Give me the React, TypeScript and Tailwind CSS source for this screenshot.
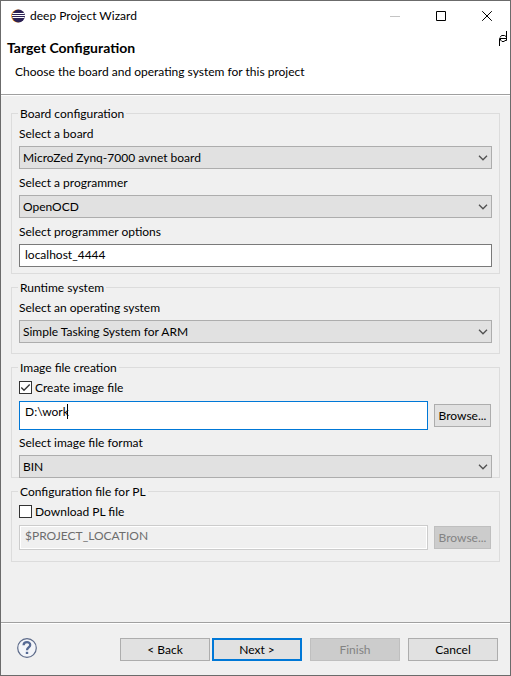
import { useId, type ReactNode } from "react";

function Chevron() {
  return (
    <svg
      className="pointer-events-none absolute top-2 right-1 h-2 w-[10px]"
      viewBox="0 0 10 8"
      fill="none"
      stroke="#505050"
      strokeWidth="1.3"
    >
      <path d="M1 1.8 5 5.8 9 1.8" />
    </svg>
  );
}

function Group({ title, className, children }: { title: string; className: string; children: ReactNode }) {
  return (
    <fieldset className={`min-w-0 border border-[#dcdcdc] px-[7px] pt-1 ${className}`}>
      <legend className="-ml-px h-[17px] px-0.5 leading-[17px]">{title}</legend>
      {children}
    </fieldset>
  );
}

function SelectField({ label, options, className = "" }: { label: string; options: string[]; className?: string }) {
  const id = useId();
  return (
    <div className={`flex flex-col gap-1 ${className}`}>
      <label htmlFor={id} className="leading-4">{label}</label>
      <div className="relative">
        <select
          id={id}
          className="block h-[23px] w-full appearance-none border border-[#adadad] bg-[#e1e1e1] pr-5 pl-[3px] leading-4 outline-none"
        >
          {options.map((o) => (
            <option key={o}>{o}</option>
          ))}
        </select>
        <Chevron />
      </div>
    </div>
  );
}

function CheckField({ label, checked = false }: { label: string; checked?: boolean }) {
  const id = useId();
  return (
    <div className="flex h-4 items-start gap-[3px]">
      <span className="relative mt-px size-[13px]">
        <input
          id={id}
          type="checkbox"
          defaultChecked={checked}
          className="peer block size-[13px] appearance-none border border-[#333] bg-white"
        />
        <svg
          className="pointer-events-none absolute inset-0 hidden size-[13px] peer-checked:block"
          viewBox="0 0 13 13"
          fill="none"
          stroke="#333"
          strokeWidth="1.3"
        >
          <path d="M2.3 6.5 5 9.3 10.7 3.5" />
        </svg>
      </span>
      <label htmlFor={id} className="leading-4">{label}</label>
    </div>
  );
}

function EclipseIcon() {
  return (
    <svg className="size-[14px]" viewBox="0 0 14 14">
      <circle cx="6.6" cy="7" r="6.5" fill="#f7941e" />
      <circle cx="7.5" cy="7" r="6.5" fill="#2c2255" />
      <path d="M1.5 4.5h12M1 6.5h13M1.5 8.5h12" stroke="#fff" strokeWidth="1" />
    </svg>
  );
}

const button =
  "h-[23px] border border-[#adadad] bg-[#e1e1e1] leading-4 disabled:border-[#bfbfbf] disabled:bg-[#ccc] disabled:text-[#838383]";

export default function App() {
  return (
    <div className="flex min-h-screen flex-col border border-[#6b6b6b] bg-[#f0f0f0] font-['Lato','Noto_Sans',sans-serif] text-[12px] leading-4 text-black">
      <header className="border-b border-[#a0a0a0] bg-white">
        <div className="flex h-[29px] items-center pl-[10px]">
          <EclipseIcon />
          <h1 className="ml-[5px] flex-1">deep Project Wizard</h1>
          <button aria-label="Minimize" className="flex h-full w-[46px] items-center justify-center">
            <svg className="size-[10px]" viewBox="0 0 10 10" stroke="#c4c4c4">
              <path d="M0 5.5h10" />
            </svg>
          </button>
          <button aria-label="Maximize" className="flex h-full w-[46px] items-center justify-center">
            <svg className="size-[10px]" viewBox="0 0 10 10" fill="none" stroke="#000">
              <path d="M.5.5h9v9h-9z" />
            </svg>
          </button>
          <button aria-label="Close" className="flex h-full w-[46px] items-center justify-center">
            <svg className="size-[10px]" viewBox="0 0 10 10" fill="none" stroke="#000">
              <path d="m.2.2 9.6 9.6M9.8.2.2 9.8" />
            </svg>
          </button>
        </div>
        <div className="flex h-16 justify-between">
          <div className="flex flex-col gap-2 pt-[10px] pl-[6px]">
            <h2 className="text-[14px] leading-4 font-bold">Target Configuration</h2>
            <p className="pl-2">Choose the board and operating system for this project</p>
          </div>
          <svg className="mt-px mr-[3px] h-[15px] w-2" viewBox="0 0 8 15" fill="none" stroke="#000">
            <path d="M.5 15V7.5M7.5 0v9.5H5.5M.5 7.5h7" />
            <path d="M1 6.5 2.5 4.5h3L7 5.5M1.5 8v1L3 10.5h2.5" />
          </svg>
        </div>
      </header>

      <main className="flex flex-1 flex-col gap-[5px] border-t border-white px-[10px] pt-[9px]">
        <Group title="Board configuration" className="pb-[6px]">
          <div className="flex flex-col gap-[6px]">
            <SelectField label="Select a board" options={["MicroZed Zynq-7000 avnet board"]} />
            <SelectField label="Select a programmer" options={["OpenOCD"]} />
            <div className="flex flex-col gap-1">
              <label htmlFor="prog-options" className="leading-4">Select programmer options</label>
              <input
                id="prog-options"
                defaultValue="localhost_4444"
                className="h-[23px] w-full border border-[#7a7a7a] bg-white pb-0.5 pl-[5px] outline-none"
              />
            </div>
          </div>
        </Group>

        <Group title="Runtime system" className="pb-[10px]">
          <SelectField label="Select an operating system" options={["Simple Tasking System for ARM"]} />
        </Group>

        <Group title="Image file creation" className="">
          <CheckField label="Create image file" checked />
          <div className="mt-[5px] flex items-center gap-[6px] pr-px">
            <div className="relative min-w-0 flex-1">
              <input
                aria-label="Image file path"
                defaultValue="D:\work"
                className="block h-[29px] w-full border border-[#0078d7] bg-white pb-2 pl-[5px] outline-none"
              />
              <span className="absolute top-[3px] left-12 h-[15px] w-px bg-black" />
            </div>
            <button className={`w-[57px] ${button}`}>Browse...</button>
          </div>
          <SelectField label="Select image file format" options={["BIN", "HEX", "ELF"]} className="mt-[5px] -mb-px" />
        </Group>

        <Group title="Configuration file for PL" className="pb-[11px]">
          <CheckField label="Download PL file" />
          <div className="mt-[5px] flex items-center gap-[6px] pr-px">
            <input
              aria-label="PL file path"
              disabled
              defaultValue="$PROJECT_LOCATION"
              className="h-[25px] min-w-0 flex-1 border border-[#ccc] bg-[#f0f0f0] pb-[5px] pl-[5px] text-[#6d6d6d] inset-ring inset-ring-white"
            />
            <button disabled className={`w-[57px] ${button}`}>Browse...</button>
          </div>
        </Group>
      </main>

      <footer className="border-t border-[#a0a0a0]">
        <div className="flex items-center border-t border-white py-[14px] pr-3 pl-4">
          <button aria-label="Help" className="-mt-[3px]">
            <svg className="size-5" viewBox="0 0 20 20" fill="none">
              <circle cx="10" cy="10" r="9.3" fill="#f3f5f9" stroke="#5d6b8a" strokeWidth="1.2" />
              <path d="M6.6 7.2C6.8 3.2 13.3 3.3 13.2 7 13.1 9.4 10 9.4 10 12.2" stroke="#566a94" strokeWidth="2.3" />
              <path d="M8.8 13.8h2.4v2.2H8.8z" fill="#566a94" />
            </svg>
          </button>
          <div className="ml-auto flex gap-2">
            <div className="flex gap-0.5">
              <button className={`w-[90px] ${button}`}>&lt; Back</button>
              <button className="h-[23px] w-[90px] border-2 border-[#0078d7] bg-[#e1e1e1] leading-4">Next &gt;</button>
            </div>
            <button disabled className={`w-[90px] ${button}`}>Finish</button>
            <button className={`w-[90px] ${button}`}>Cancel</button>
          </div>
        </div>
      </footer>
    </div>
  );
}
